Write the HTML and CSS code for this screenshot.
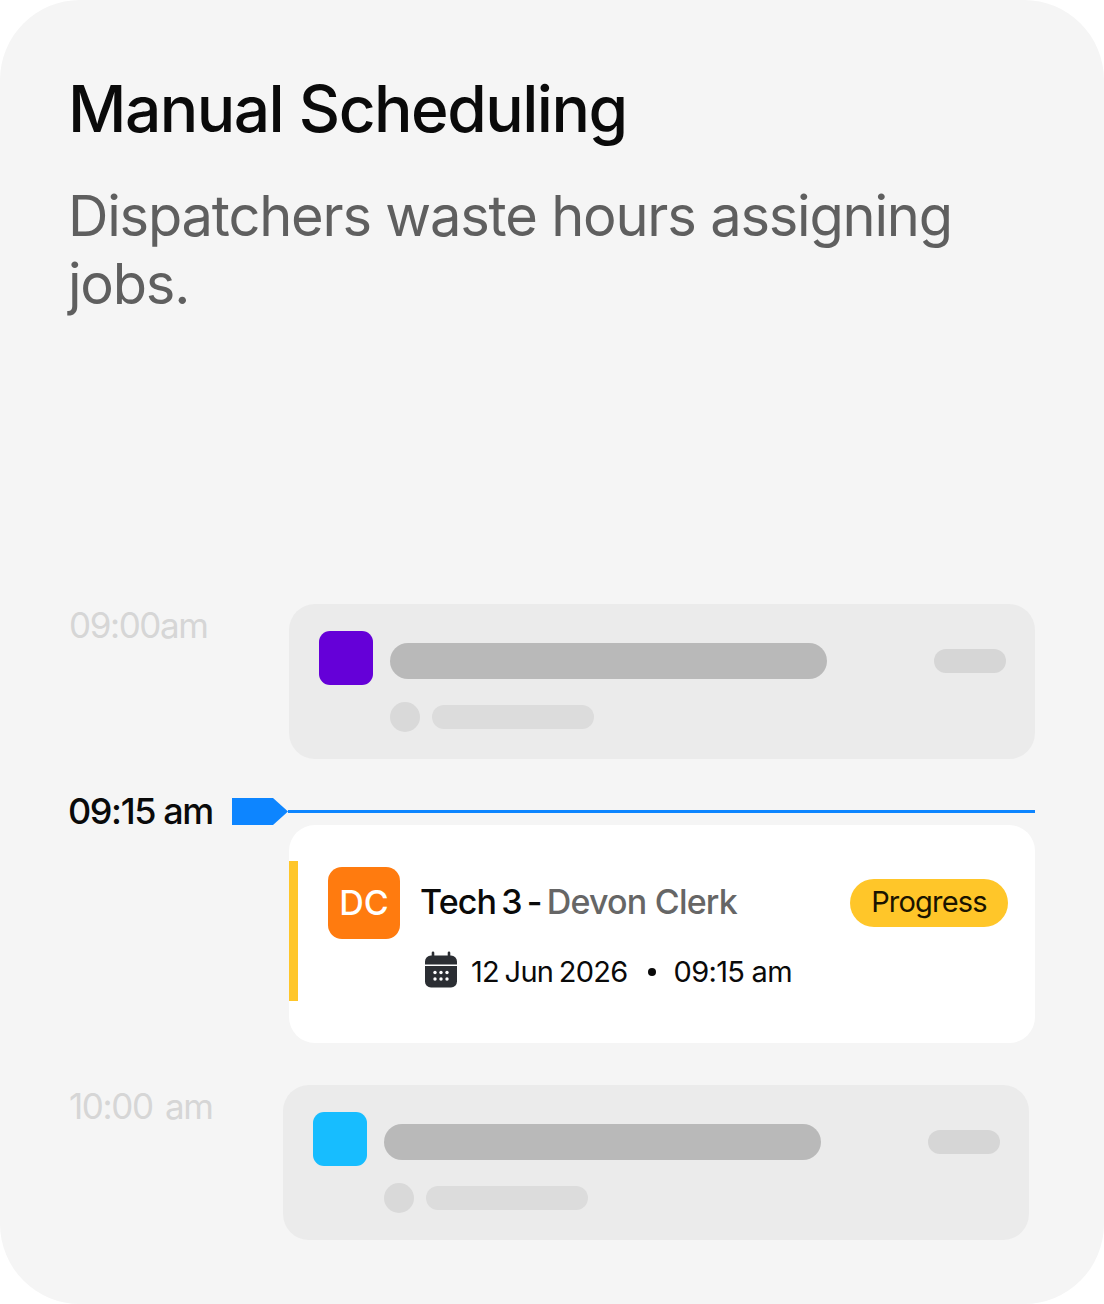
FILE: index.html
```html
<!DOCTYPE html>
<html lang="en">
<head>
    <meta charset="UTF-8">
    <meta name="viewport" content="width=device-width, initial-scale=1.0">
    <title>Manual Scheduling</title>
    <link rel="stylesheet" href="styles.css">
</head>
<body>
    <div class="card">
        <h1 class="title">Manual Scheduling</h1>
        <p class="subtitle">Dispatchers waste hours assigning jobs.</p>

        <div class="schedule">
            <div class="slot">
                <span class="time time-muted">09:00am</span>
                <div class="ghost">
                    <div class="ghost-icon ghost-icon-purple"></div>
                    <div class="ghost-body">
                        <div class="ghost-top">
                            <div class="ghost-bar"></div>
                            <div class="ghost-pill"></div>
                        </div>
                        <div class="ghost-sub">
                            <div class="ghost-dot"></div>
                            <div class="ghost-line"></div>
                        </div>
                    </div>
                </div>
            </div>

            <div class="now">
                <span class="time">09:15 am</span>
                <svg class="now-flag" width="56" height="27" viewBox="0 0 56 27"><path d="M0 0H41L56 13.5L41 27H0Z" fill="#0d85ff"/></svg>
                <div class="now-line"></div>
            </div>

            <div class="job">
                <div class="job-accent"></div>
                <div class="avatar">DC</div>
                <div class="job-main">
                    <div class="job-head">
                        <div class="job-title">Tech 3 - <span class="job-name">Devon Clerk</span></div>
                        <span class="badge">Progress</span>
                    </div>
                    <div class="job-meta">
                        <svg class="cal" width="32" height="37" viewBox="0 0 32 37">
                            <path d="M8 0.5a1.3 1.3 0 0 1 1.3 1.3V4.5H22.7V1.8a1.3 1.3 0 0 1 2.6 0V4.5H26a6 6 0 0 1 6 6V13.5H0V10.5a6 6 0 0 1 6-6H6.7V1.8A1.3 1.3 0 0 1 8 0.5Z" fill="#2b2e33"/>
                            <path d="M0 15H32V30.5a6 6 0 0 1-6 6H6a6 6 0 0 1-6-6Z" fill="#2b2e33"/>
                            <g fill="#fff">
                                <circle cx="10" cy="21.5" r="1.7"/><circle cx="16" cy="21.5" r="1.7"/><circle cx="22" cy="21.5" r="1.7"/>
                                <circle cx="10" cy="28" r="1.7"/><circle cx="16" cy="28" r="1.7"/><circle cx="22" cy="28" r="1.7"/>
                            </g>
                        </svg>
                        <span>12 Jun 2026</span>
                        <span class="sep"></span>
                        <span class="job-hour">09:15 am</span>
                    </div>
                </div>
            </div>

            <div class="slot slot-last">
                <span class="time time-muted">10:00 am</span>
                <div class="ghost">
                    <div class="ghost-icon ghost-icon-blue"></div>
                    <div class="ghost-body">
                        <div class="ghost-top">
                            <div class="ghost-bar"></div>
                            <div class="ghost-pill"></div>
                        </div>
                        <div class="ghost-sub">
                            <div class="ghost-dot"></div>
                            <div class="ghost-line"></div>
                        </div>
                    </div>
                </div>
            </div>
        </div>
    </div>
</body>
</html>
```
FILE: styles.css
```css
* {
    box-sizing: border-box;
}
html, body {
    margin: 0;
    padding: 0;
    background: #fff;
}
body {
    font-family: "Inter", "Liberation Sans", sans-serif;
}
.card {
    width: 1104px;
    height: 1304px;
    background: #f5f5f5;
    border-radius: 80px;
    padding: 70px 69px 0 68px;
    display: flex;
    flex-direction: column;
}
.title {
    margin: 0;
    font-size: 64px;
    line-height: 78px;
    font-weight: 500;
    letter-spacing: -1.5px;
    color: #0a0a0a;
}
.subtitle {
    margin: 34px 0 0;
    width: 900px;
    font-size: 56px;
    line-height: 68px;
    font-weight: 400;
    letter-spacing: -1.2px;
    color: #5f5f5f;
}
.schedule {
    margin-top: 286px;
    display: flex;
    flex-direction: column;
}
.slot {
    display: flex;
    align-items: flex-start;
}
.slot .ghost {
    margin-left: auto;
}
.slot-last {
    margin-top: 42px;
    padding-right: 6px;
}
.time {
    padding-bottom: 2px;
    font-size: 36px;
    line-height: 42px;
    font-weight: 500;
    letter-spacing: -1.4px;
    color: #0a0a0a;
    white-space: nowrap;
}
.time-muted {
    padding: 0 0 2px 1px;
    font-size: 35px;
    font-weight: 400;
    letter-spacing: -1.4px;
    word-spacing: 4px;
    color: #d6d6d6;
}
.ghost {
    width: 746px;
    height: 155px;
    background: #ebebeb;
    border-radius: 26px;
    padding: 27px 29px 0 30px;
    display: flex;
    gap: 17px;
}
.ghost-icon {
    width: 54px;
    height: 54px;
    border-radius: 11px;
    flex-shrink: 0;
}
.ghost-icon-purple {
    background: #6500d8;
}
.ghost-icon-blue {
    background: #17bdff;
}
.ghost-body {
    flex-grow: 1;
}
.ghost-top {
    margin-top: 12px;
    display: flex;
    align-items: center;
    justify-content: space-between;
}
.ghost-bar {
    width: 437px;
    height: 36px;
    border-radius: 18px;
    background: #b9b9b9;
}
.ghost-pill {
    width: 72px;
    height: 24px;
    border-radius: 12px;
    background: #d6d6d6;
}
.ghost-sub {
    margin-top: 23px;
    display: flex;
    align-items: center;
    gap: 12px;
}
.ghost-dot {
    width: 30px;
    height: 30px;
    border-radius: 50%;
    background: #d9d9d9;
}
.ghost-line {
    width: 162px;
    height: 24px;
    border-radius: 12px;
    background: #dcdcdc;
}
.now {
    margin-top: 39px;
    height: 27px;
    display: flex;
    align-items: center;
}
.now-flag {
    margin-left: 19px;
    flex-shrink: 0;
}
.now-line {
    flex-grow: 1;
    height: 3px;
    background: #0d85ff;
}
.job {
    align-self: flex-end;
    width: 746px;
    height: 218px;
    background: #fff;
    border-radius: 26px;
    padding: 42px 27px 0 39px;
    display: flex;
    gap: 21px;
    position: relative;
}
.job-accent {
    position: absolute;
    left: 0;
    top: 36px;
    width: 9px;
    height: 140px;
    background: #ffc629;
}
.avatar {
    width: 72px;
    height: 72px;
    border-radius: 14px;
    background: #ff7b0f;
    color: #fff;
    font-size: 34px;
    font-weight: 500;
    padding-bottom: 2px;
    display: flex;
    align-items: center;
    justify-content: center;
    flex-shrink: 0;
}
.job-main {
    flex-grow: 1;
}
.job-head {
    margin-top: 12px;
    height: 48px;
    display: flex;
    align-items: center;
    justify-content: space-between;
}
.job-title {
    margin-left: -1px;
    padding-bottom: 4px;
    font-size: 34px;
    font-weight: 500;
    letter-spacing: -0.9px;
    word-spacing: -3px;
    color: #0a0a0a;
}
.job-name {
    word-spacing: 0;
    letter-spacing: -0.8px;
    color: #666;
}
.badge {
    width: 158px;
    height: 48px;
    border-radius: 24px;
    background: #ffc629;
    color: #1a1400;
    font-size: 29px;
    font-weight: 400;
    letter-spacing: -0.8px;
    padding-bottom: 4px;
    display: flex;
    align-items: center;
    justify-content: center;
}
.job-meta {
    margin-top: 27px;
    padding-left: 4px;
    display: flex;
    align-items: center;
    font-size: 29px;
    letter-spacing: -0.7px;
    word-spacing: -2px;
    color: #0a0a0a;
}
.cal {
    margin-top: -4px;
    margin-right: 14px;
}
.sep {
    width: 8px;
    height: 8px;
    border-radius: 50%;
    background: #0a0a0a;
    margin: 0 18px 0 20px;
}
.job-hour {
    word-spacing: 0;
}
```
